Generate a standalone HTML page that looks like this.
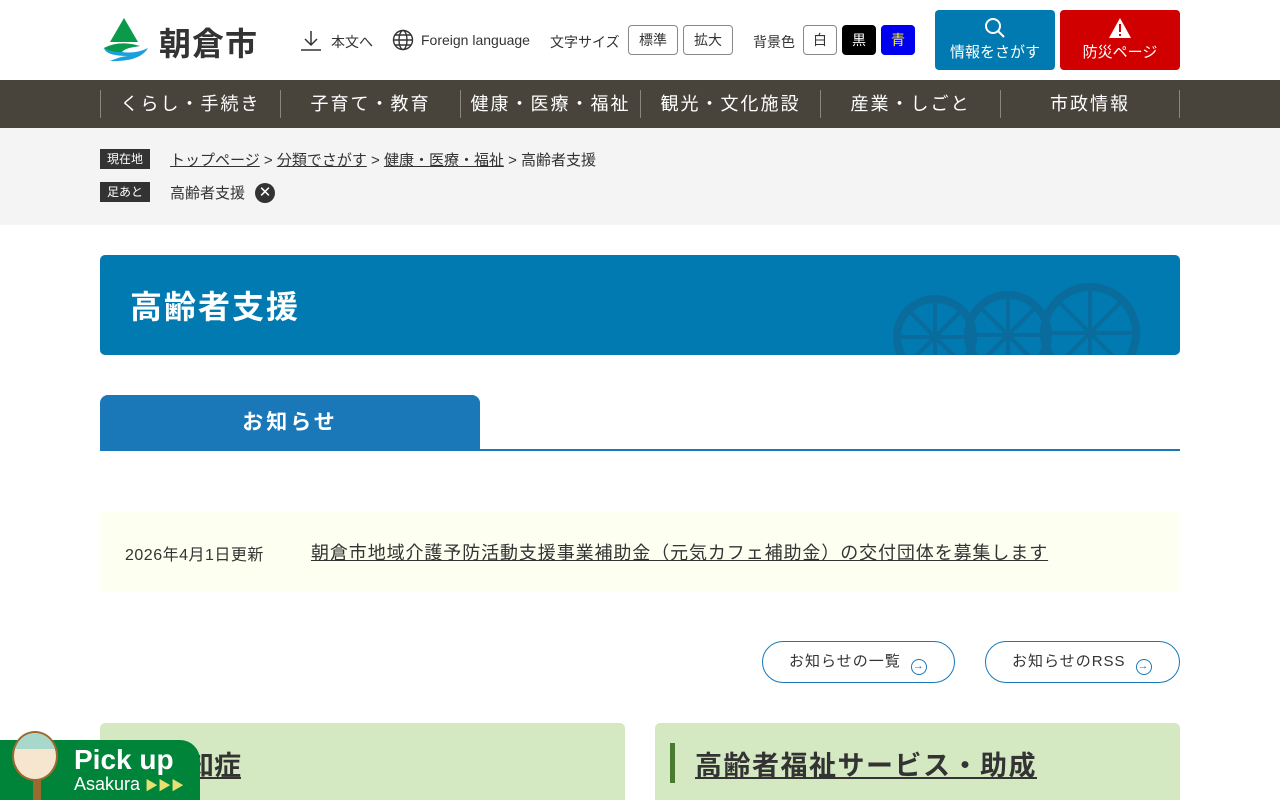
<!DOCTYPE html>
<html style="height:800px;overflow:hidden"><head><meta charset="utf-8"><style>
*{box-sizing:border-box;margin:0;padding:0}
body{width:1280px;height:800px;overflow:hidden;background:#fff;font-family:"Liberation Sans","Noto Sans CJK JP",sans-serif;color:#333;position:relative}
.abs{position:absolute}
.tb{position:absolute;top:25px;height:30px;border:1px solid #888;border-radius:4px;font-size:14px;line-height:28px;text-align:center;background:#fff}
.nav{position:absolute;top:80px;left:0;width:1280px;height:48px;background:#48433b}
.nav div{position:absolute;top:10px;height:28px;width:180px;border-left:1px solid #8a857e;color:#fff;font-size:18px;letter-spacing:2px;text-align:center;line-height:28px}
.bc{position:absolute;top:128px;left:0;width:1280px;height:97px;background:#f4f4f4}
.lab{position:absolute;left:100px;width:50px;height:20px;background:#333;color:#fff;font-size:12px;line-height:20px;text-align:center}
.btn{position:absolute;top:641px;height:42px;border:1px solid #1a78b8;border-radius:21px;font-size:15px;line-height:40px;color:#333;letter-spacing:1px}
.ci{display:inline-block;width:16px;height:16px;border:1.5px solid #1a78b8;border-radius:50%;vertical-align:-3px;margin-left:10px;font-size:11px;line-height:13px;text-align:center;color:#1a78b8}
</style></head><body>
<svg class="abs" style="left:100px;top:18px" width="48" height="44" viewBox="0 0 48 44"><polygon points="24,0 38,24 10,24" fill="#0a9a4a"/><path d="M4 30 Q20 22 40 28 Q24 30 22 34 Q36 36 48 30 Q40 44 10 43 Q22 38 28 38 Q6 38 4 30Z" fill="#1aa0dc"/><path d="M4 30 Q20 22 40 28 Q24 30 22 34 Q10 34 4 30Z" fill="#0a9a4a"/></svg>
<div class="abs" style="left:159px;top:19px;font-size:32px;font-weight:bold;color:#333;letter-spacing:1px">朝倉市</div>
<svg class="abs" style="left:300px;top:29px" width="22" height="22" viewBox="0 0 22 22" fill="none" stroke="#333" stroke-width="1.5"><path d="M11 2v14M5 10l6 6 6-6M1 21h20"/></svg>
<div class="abs" style="left:331px;top:32px;font-size:14px">本文へ</div>
<svg class="abs" style="left:392px;top:29px" width="22" height="22" viewBox="0 0 22 22" fill="none" stroke="#333" stroke-width="1.4"><circle cx="11" cy="11" r="9.5"/><ellipse cx="11" cy="11" rx="4" ry="9.5"/><path d="M1.5 11h19M3 6h16M3 16h16"/></svg>
<div class="abs" style="left:421px;top:32px;font-size:14px">Foreign language</div>
<div class="abs" style="left:550px;top:32px;font-size:14px">文字サイズ</div>
<div class="tb" style="left:628px;width:50px">標準</div>
<div class="tb" style="left:683px;width:50px">拡大</div>
<div class="abs" style="left:753px;top:32px;font-size:14px">背景色</div>
<div class="tb" style="left:803px;width:34px">白</div>
<div class="tb" style="left:842px;width:34px;background:#000;color:#fff;border-color:#000">黒</div>
<div class="tb" style="left:881px;width:34px;background:#0000f0;color:#ff0;border-color:#0000f0">青</div>
<div class="abs" style="left:935px;top:10px;width:120px;height:60px;background:#007ab0;border-radius:4px;color:#fff;font-size:15px;text-align:center">
<svg style="margin-top:7px" width="22" height="22" viewBox="0 0 22 22" fill="none" stroke="#fff" stroke-width="2"><circle cx="9" cy="9" r="7"/><path d="M14 14l6 6"/></svg><div style="margin-top:-2px">情報をさがす</div></div>
<div class="abs" style="left:1060px;top:10px;width:120px;height:60px;background:#d00000;border-radius:4px;color:#fff;font-size:15px;text-align:center">
<svg style="margin-top:7px" width="24" height="22" viewBox="0 0 24 22"><polygon points="12,1 23,21 1,21" fill="#fff"/><rect x="11" y="7" width="2" height="8" fill="#d00000"/><rect x="11" y="17" width="2" height="2" fill="#d00000"/></svg><div style="margin-top:-2px">防災ページ</div></div>
<div class="nav">
<div style="left:100px">くらし・手続き</div><div style="left:280px">子育て・教育</div><div style="left:460px">健康・医療・福祉</div><div style="left:640px">観光・文化施設</div><div style="left:820px">産業・しごと</div><div style="left:1000px;border-right:1px solid #8a857e">市政情報</div>
</div>
<div class="bc">
<div class="lab" style="top:21px">現在地</div>
<div class="abs" style="left:170px;top:21px;font-size:15px"><u>トップページ</u> &gt; <u>分類でさがす</u> &gt; <u>健康・医療・福祉</u> &gt; 高齢者支援</div>
<div class="lab" style="top:54px">足あと</div>
<div class="abs" style="left:170px;top:54px;font-size:15px">高齢者支援</div>
<div class="abs" style="left:255px;top:55px;width:20px;height:20px;border-radius:50%;background:#333;color:#fff;font-size:15px;line-height:20px;text-align:center">✕</div>
</div>
<div class="abs" style="left:100px;top:255px;width:1080px;height:100px;background:#007ab0;border-radius:5px;overflow:hidden">
<div class="abs" style="left:30px;top:27px;font-size:32px;font-weight:bold;color:#fff;letter-spacing:2px">高齢者支援</div>
<svg class="abs" style="left:790px;top:12px" width="280" height="100" viewBox="0 0 280 100" fill="none" stroke="#0a6c9c" stroke-width="8"><circle cx="45" cy="70" r="38"/><circle cx="118" cy="68" r="40"/><circle cx="200" cy="66" r="46"/><path d="M45 32v76M7 70h76M18 43l54 54M72 43l-54 54M118 28v80M78 68h80M90 40l56 56M146 40l-56 56M200 20v90M154 66h92M168 34l64 64M232 34l-64 64" stroke-width="4"/></svg>
</div>
<div class="abs" style="left:100px;top:395px;width:380px;height:56px;background:#1a78b8;border-radius:8px 8px 0 0;color:#fff;font-size:21px;font-weight:bold;text-align:center;line-height:56px;letter-spacing:3px">お知らせ</div>
<div class="abs" style="left:100px;top:449px;width:1080px;height:2px;background:#1a78b8"></div>
<div class="abs" style="left:100px;top:512px;width:1080px;height:80px;background:#fdfff0"></div>
<div class="abs" style="left:125px;top:541px;font-size:16px;letter-spacing:.5px">2026年4月1日更新</div>
<div class="abs" style="left:311px;top:539px;font-size:18px;text-decoration:underline;letter-spacing:.9px">朝倉市地域介護予防活動支援事業補助金（元気カフェ補助金）の交付団体を募集します</div>
<div class="btn" style="left:762px;width:193px;padding-left:26px">お知らせの一覧<span class="ci">→</span></div>
<div class="btn" style="left:985px;width:195px;padding-left:26px">お知らせのRSS<span class="ci">→</span></div>
<div class="abs" style="left:100px;top:723px;width:525px;height:77px;background:#d4e8c2;border-radius:5px 5px 0 0"></div>
<div class="abs" style="left:655px;top:723px;width:525px;height:77px;background:#d4e8c2;border-radius:5px 5px 0 0"></div>
<div class="abs" style="left:670px;top:743px;width:5px;height:40px;background:#4a7a30"></div>
<div class="abs" style="left:695px;top:744px;font-size:27px;font-weight:bold;text-decoration:underline;letter-spacing:1.5px">高齢者福祉サービス・助成</div>
<div class="abs" style="left:160px;top:744px;font-size:27px;font-weight:bold;text-decoration:underline">認知症</div>
<div class="abs" style="left:0;top:740px;width:200px;height:60px;background:#00843a;border-radius:0 20px 0 0"></div>
<div class="abs" style="left:74px;top:744px;font-size:28px;font-weight:bold;color:#fff">Pick up</div>
<div class="abs" style="left:74px;top:774px;font-size:18px;color:#fff">Asakura <span style="color:#e8e070;font-size:13px">▶▶▶</span></div>
<div class="abs" style="left:33px;top:775px;width:8px;height:25px;background:#9a6a30"></div>
<div class="abs" style="left:12px;top:731px;width:46px;height:50px;border-radius:50%;background:#f6e6d0;border:2px solid #9a6a30;overflow:hidden"><div style="height:16px;background:#a8d8cc"></div></div>
</body></html>
